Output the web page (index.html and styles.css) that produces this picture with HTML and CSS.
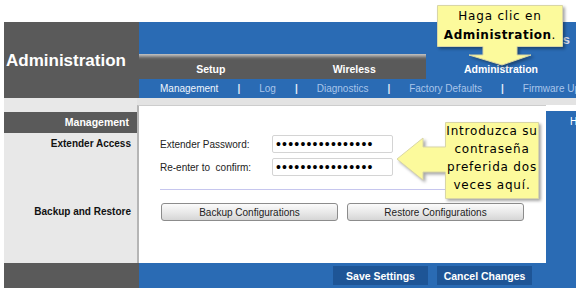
FILE: index.html
```html
<!DOCTYPE html>
<html lang="es">
<head>
    <meta charset="UTF-8">
    <meta name="viewport" content="width=device-width, initial-scale=1.0">
    <title>Administration</title>
    <link rel="stylesheet" href="styles.css">
</head>
<body>
    <div class="page">
        <div class="head">
            <div class="brand">Administration</div>
            <div class="nav">
                <div class="topbar"><span class="product">Range Extenders</span></div>
                <div class="tabs">
                    <div class="tab-group">
                        <span class="tab">Setup</span>
                        <span class="tab">Wireless</span>
                    </div>
                    <div class="tab active">Administration</div>
                </div>
                <div class="submenu">
                    <span class="current">Management</span>
                    <span class="sep">|</span>
                    <span>Log</span>
                    <span class="sep">|</span>
                    <span>Diagnostics</span>
                    <span class="sep">|</span>
                    <span>Factory Defaults</span>
                    <span class="sep">|</span>
                    <span>Firmware Upgrade</span>
                </div>
            </div>
        </div>

        <div class="body">
            <div class="side">
                <div class="side-title">Management</div>
                <div class="side-label access">Extender Access</div>
                <div class="side-label backup">Backup and Restore</div>
            </div>
            <div class="main">
                <div class="panel">
                    <div class="field">
                        <label for="pass1">Extender Password:</label>
                        <input type="password" id="pass1" value="adminadminadmin1">
                    </div>
                    <div class="field second">
                        <label for="pass2">Re-enter to &nbsp;confirm:</label>
                        <input type="password" id="pass2" value="adminadminadmin1">
                    </div>
                    <div class="divider"></div>
                    <div class="actions">
                        <button class="conf">Backup Configurations</button>
                        <button class="conf">Restore Configurations</button>
                    </div>
                </div>
                <div class="help"><div class="help-box">Help...</div></div>
            </div>
        </div>

        <div class="foot">
            <div class="foot-side"></div>
            <div class="foot-bar">
                <button class="save">Save Settings</button>
                <button class="save">Cancel Changes</button>
            </div>
        </div>
    </div>

    <!-- notas amarillas encima de la pagina -->
    <div class="callout callout-tab">
        <svg class="shape" width="130" height="66" viewBox="0 0 130 66">
            <path d="M0.5,0.5 H125.5 V41.5 H80 V50 H94 L65,60 L32,50 H46 V41.5 H0.5 Z"/>
        </svg>
        <div class="note note-tab">Haga clic en<br><b>Administration</b>.</div>
    </div>

    <div class="callout callout-pass">
        <svg class="shape" width="150" height="82" viewBox="0 0 150 82">
            <path d="M50.5,0.5 H143.5 V76.5 H50.5 V50 H28 V58 L2,37 L28,16 V25 H50.5 Z"/>
        </svg>
        <div class="note note-pass">Introduzca su<br>contraseña<br>preferida dos<br>veces aquí.</div>
    </div>
</body>
</html>
```

FILE: styles.css
```css
body { margin: 0; background: white; font-family: "Liberation Sans", Arial, sans-serif; }
.page { margin: 22px 0 0 4px; width: 572px; }

/* cabecera */
.head { display: flex; height: 76px; }
.brand { flex: none; width: 133px; background: #5a5a5a; color: white; font-weight: bold; font-size: 17px; line-height: 20px; padding: 29px 0 0 2px; }
.nav { flex: 1; min-width: 0; display: flex; flex-direction: column; }
.topbar { height: 32px; background: #2a6bb4; text-align: right; padding-right: 6px; overflow: hidden; white-space: nowrap; }
.product { color: #d8dde8; font-weight: bold; font-size: 13px; line-height: 32px; position: relative; top: 2px; }

.tabs { display: flex; height: 25px; }
.tab-group { flex: none; width: 287px; display: flex; background: linear-gradient(#c4c4c4 0px, #9a9a9a 2px, #6a6a6a 4px, #5a5a5a 6px); }
.tab { flex: 1; text-align: center; color: white; font-weight: bold; font-size: 10.5px; padding-top: 8px; line-height: 14px; }
.tab.active { background: #2a6bb4; }

.submenu { height: 19px; background: #2a6bb4; display: flex; gap: 19px; padding-left: 21px; font-size: 10px; line-height: 19px; color: #a9c5ea; white-space: nowrap; overflow: hidden; }
.submenu .current { color: #eef4fc; }
.submenu .sep { color: #e3ecf8; font-weight: bold; }

/* cuerpo */
.body { display: flex; height: 165px; }
.side { flex: none; width: 133px; background: #e8e8e8; }
.side-title { margin-top: 14px; height: 21px; background: #5a5a5a; color: white; font-weight: bold; font-size: 10.5px; line-height: 21px; text-align: right; padding-right: 8px; }
.side-label { text-align: right; padding-right: 6px; font-weight: bold; font-size: 10px; line-height: 14px; color: #111; }
.side-label.access { margin-top: 4px; }
.side-label.backup { margin-top: 54px; }

.main { flex: 1; min-width: 0; display: flex; background: #e3e3e3; padding-top: 7px; }
.panel { flex: none; width: 409px; background: white; border-left: 2px solid #b5b5b5; border-top: 1px solid #cdcdcd; padding: 29px 0 0 21px; box-sizing: border-box; }
.help { flex: 1; min-width: 0; background: white; padding-top: 6px; overflow: hidden; }
.help-box { height: 100%; background: #2a6bb4; color: white; font-size: 10px; padding: 5px 0 0 24px; box-sizing: border-box; white-space: nowrap; }

.field { display: flex; align-items: center; height: 18px; }
.field.second { margin-top: 5px; }
.field label { width: 112px; font-size: 10px; color: #222; }
.field input { width: 121px; height: 18px; box-sizing: border-box; border: 1px solid #d4d4d4; border-radius: 2px; padding: 0 0 0 3px; font-family: "Liberation Sans", Arial, sans-serif; font-size: 14px; letter-spacing: 1.2px; color: black; }

.divider { margin: 13px 8px 0 0; height: 1px; background: #c6c6ee; }
.actions { display: flex; gap: 9px; margin: 13px 0 0 1px; }
.conf { width: 177px; height: 18px; padding: 0; border: 1px solid #8c8c8c; border-radius: 3px; background: linear-gradient(#fbfbfb, #e6e6e6 60%, #d6d6d6); font-family: "Liberation Sans", Arial, sans-serif; font-size: 10px; color: #222; }

/* pie */
.foot { display: flex; height: 25px; }
.foot-side { flex: none; width: 135px; background: #5a5a5a; }
.foot-bar { flex: 1; background: #2a6bb4; display: flex; justify-content: flex-end; align-items: center; gap: 9px; padding-right: 44px; }
.save { width: 95px; height: 19px; padding: 0; border: none; background: #1e5596; color: white; font-family: "Liberation Sans", Arial, sans-serif; font-weight: bold; font-size: 10.5px; }

/* notas */
.callout { position: absolute; }
.callout-tab { left: 437px; top: 5px; width: 130px; height: 66px; }
.callout-pass { left: 395px; top: 122px; width: 150px; height: 82px; }
.shape { position: absolute; left: 0; top: 0; filter: drop-shadow(2px 2px 1.5px rgba(0, 0, 0, 0.35)); }
.shape path { fill: #fcfa9c; stroke: #d9d6a6; stroke-width: 1; }
.note { position: absolute; text-align: center; font-family: "DejaVu Sans", Verdana, sans-serif; font-size: 12px; letter-spacing: 0.8px; color: black; }
.note-tab { left: 0; top: 2px; width: 126px; line-height: 19px; }
.note-tab b { letter-spacing: 0.5px; }
.note-pass { left: 50px; top: 0; width: 94px; line-height: 18px; }
```
